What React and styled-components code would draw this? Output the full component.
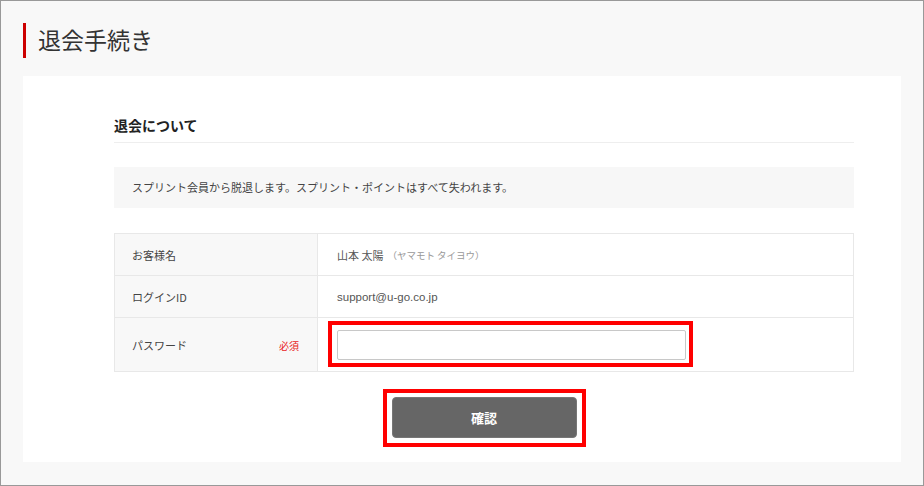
import React from 'react';
import styled, { createGlobalStyle } from 'styled-components';

const GlobalStyle = createGlobalStyle`
  html, body {
    margin: 0;
    padding: 0;
    background: #fff;
  }
  * {
    box-sizing: border-box;
  }
`;

// Page frame
const Page = styled.div`
  width: 924px;
  height: 486px;
  border: 1px solid #999;
  background: #f8f8f8;
  padding: 22px 22px 0 22px;
  font-family: "Liberation Sans", "Noto Sans CJK JP", sans-serif;
  color: #444;
`;

const PageTitle = styled.h1`
  margin: 0 0 18px 0;
  height: 35px;
  line-height: 33px;
  border-left: 3px solid #cc0000;
  padding-left: 12px;
  font-size: 23px;
  font-weight: normal;
  color: #333;
  font-family: "Noto Sans CJK JP", sans-serif;
`;

const Card = styled.div`
  background: #fff;
  padding: 38px 47px 24px 91px;
`;

const SectionTitle = styled.h2`
  margin: 0;
  font-size: 14px;
  font-weight: bold;
  line-height: 22px;
  padding-bottom: 6px;
  border-bottom: 1px solid #eeeeee;
  color: #222;
  font-family: "Noto Sans CJK JP", sans-serif;
`;

const Notice = styled.div`
  margin-top: 24px;
  height: 41px;
  line-height: 41px;
  padding: 0 18px;
  background: #f7f7f7;
  font-size: 11px;
  color: #444;
  font-family: "Noto Sans CJK JP", sans-serif;
`;

const Table = styled.div`
  margin-top: 25px;
  border: 1px solid #e8e8e8;
`;

const Row = styled.div`
  display: grid;
  grid-template-columns: 202px 1fr;
  height: ${(p) => p.$height}px;
  & + & {
    border-top: 1px solid #e8e8e8;
  }
`;

const Label = styled.div`
  display: flex;
  align-items: center;
  justify-content: space-between;
  padding: 0 18px 0 17px;
  background: #f8f8f8;
  font-size: 11px;
  color: #444;
  font-family: "Noto Sans CJK JP", sans-serif;
`;

const Required = styled.span`
  color: #e81c1c;
  font-size: 10px;
  margin-top: 2px;
`;

const Value = styled.div`
  display: flex;
  align-items: center;
  padding: 0 19px;
  border-left: 1px solid #e8e8e8;
  font-size: 11.5px;
  color: #555;
`;

const Name = styled.span`
  font-family: "Noto Sans CJK JP", sans-serif;
  font-size: 11px;
`;

const Kana = styled.span`
  margin-left: 4px;
  font-size: 9.5px;
  color: #999;
  font-family: "Noto Sans CJK JP", sans-serif;
`;

// red annotation frame drawn over the element
const Highlight = styled.span`
  position: relative;
  display: inline-flex;
  &::after {
    content: '';
    position: absolute;
    top: ${(p) => p.$t}px;
    right: ${(p) => p.$r}px;
    bottom: ${(p) => p.$b}px;
    left: ${(p) => p.$l}px;
    border: 4px solid #ff0000;
    pointer-events: none;
  }
`;

const PasswordInput = styled.input`
  width: 349px;
  height: 30px;
  border: 1px solid #c8c8c8;
  border-radius: 2px;
  background: #fff;
  outline: none;
  padding: 0 8px;
`;

const Actions = styled.div`
  display: flex;
  justify-content: center;
  margin-top: 25px;
`;

const ConfirmButton = styled.button`
  width: 185px;
  height: 41px;
  background: #666;
  border: 1px solid #777;
  border-radius: 4px;
  color: #fff;
  font-size: 13px;
  font-weight: bold;
  font-family: "Noto Sans CJK JP", sans-serif;
  cursor: pointer;
`;

const App = () => {
  return (
    <>
      <GlobalStyle />
      <Page>
        <PageTitle>退会手続き</PageTitle>
        <Card>
          <SectionTitle>退会について</SectionTitle>
          <Notice>スプリント会員から脱退します。スプリント・ポイントはすべて失われます。</Notice>

          <Table>
            <Row $height={41}>
              <Label>お客様名</Label>
              <Value>
                <Name>山本 太陽</Name>
                <Kana>（ヤマモト タイヨウ）</Kana>
              </Value>
            </Row>
            <Row $height={42}>
              <Label>ログインID</Label>
              <Value>support@u-go.co.jp</Value>
            </Row>
            <Row $height={54}>
              <Label>
                パスワード
                <Required>必須</Required>
              </Label>
              <Value>
                <Highlight $t={-9} $r={-7} $b={-7} $l={-9}>
                  <PasswordInput type="password" />
                </Highlight>
              </Value>
            </Row>
          </Table>

          <Actions>
            <Highlight $t={-8} $r={-9} $b={-9} $l={-9}>
              <ConfirmButton>確認</ConfirmButton>
            </Highlight>
          </Actions>
        </Card>
      </Page>
    </>
  );
};

export default App;
